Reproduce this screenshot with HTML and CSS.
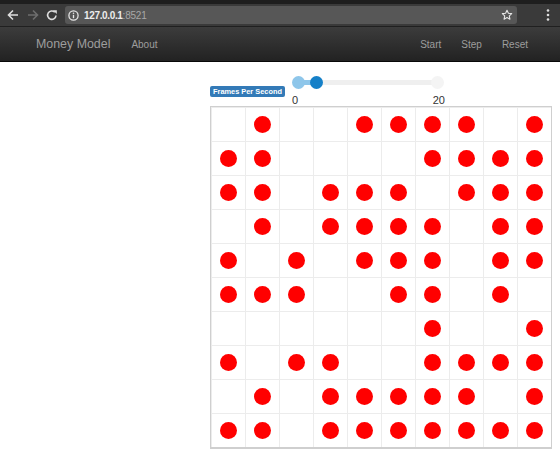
FILE: index.html
```html
<!DOCTYPE html>
<html>
<head>
<meta charset="utf-8">
<title>Money Model</title>
<link rel="stylesheet" href="styles.css">
</head>
<body>
<div class="chrome">
  <div class="tabstrip"></div>
  <div class="toolbar">
    <svg class="tb-icon back" width="14" height="14" viewBox="0 0 14 14"><path d="M12 7H2.5M7 2.5L2.5 7 7 11.5" fill="none" stroke="#dedede" stroke-width="1.6"/></svg>
    <svg class="tb-icon fwd" width="14" height="14" viewBox="0 0 14 14"><path d="M2 7h9.5M7 2.5L11.5 7 7 11.5" fill="none" stroke="#6e6e6e" stroke-width="1.6"/></svg>
    <svg class="tb-icon reload" width="14" height="14" viewBox="0 0 14 14"><path d="M11 7.5A4.2 4.2 0 1 1 9.8 4.2" fill="none" stroke="#dedede" stroke-width="1.6"/><path d="M8 2.2h3.8V6z" fill="#dedede"/></svg>
    <div class="omnibox">
      <svg class="info" width="11" height="11" viewBox="0 0 11 11"><circle cx="5.5" cy="5.5" r="4.6" fill="none" stroke="#e6e6e6" stroke-width="1.3"/><path d="M5.5 4.8v3.4" stroke="#e6e6e6" stroke-width="1.3"/><circle cx="5.5" cy="3.2" r="0.8" fill="#e6e6e6"/></svg>
      <span class="host">127.0.0.1</span><span class="port">:8521</span>
      <svg class="star" width="12" height="12" viewBox="0 0 12 12"><path d="M6 1.2l1.4 3 3.3.4-2.4 2.3.6 3.3L6 8.6 3.1 10.2l.6-3.3L1.3 4.6l3.3-.4z" fill="none" stroke="#e6e6e6" stroke-width="1.1" stroke-linejoin="round"/></svg>
    </div>
    <svg class="tb-icon menu" width="4" height="14" viewBox="0 0 4 14"><circle cx="2" cy="2.5" r="1.3" fill="#dedede"/><circle cx="2" cy="7" r="1.3" fill="#dedede"/><circle cx="2" cy="11.5" r="1.3" fill="#dedede"/></svg>
  </div>
</div>

<nav class="navbar">
  <a class="brand">Money Model</a>
  <a class="nav-link about">About</a>
  <div class="nav-right">
    <a class="nav-link">Start</a>
    <a class="nav-link">Step</a>
    <a class="nav-link">Reset</a>
  </div>
</nav>

<main class="main">
  <div class="controls">
    <span class="badge">Frames Per Second</span>
    <div class="slider">
      <div class="slider-bar">
        <div class="track"></div>
        <div class="fill"></div>
        <div class="knob knob-min"></div>
        <div class="knob knob-val"></div>
        <div class="knob knob-max"></div>
      </div>
      <div class="ticks"><span>0</span><span>20</span></div>
    </div>
  </div>

  <div class="board">
    <div class="cell"></div><div class="cell"><span class="dot"></span></div><div class="cell"></div><div class="cell"></div><div class="cell"><span class="dot"></span></div><div class="cell"><span class="dot"></span></div><div class="cell"><span class="dot"></span></div><div class="cell"><span class="dot"></span></div><div class="cell"></div><div class="cell"><span class="dot"></span></div>
    <div class="cell"><span class="dot"></span></div><div class="cell"><span class="dot"></span></div><div class="cell"></div><div class="cell"></div><div class="cell"></div><div class="cell"></div><div class="cell"><span class="dot"></span></div><div class="cell"><span class="dot"></span></div><div class="cell"><span class="dot"></span></div><div class="cell"><span class="dot"></span></div>
    <div class="cell"><span class="dot"></span></div><div class="cell"><span class="dot"></span></div><div class="cell"></div><div class="cell"><span class="dot"></span></div><div class="cell"><span class="dot"></span></div><div class="cell"><span class="dot"></span></div><div class="cell"></div><div class="cell"><span class="dot"></span></div><div class="cell"><span class="dot"></span></div><div class="cell"><span class="dot"></span></div>
    <div class="cell"></div><div class="cell"><span class="dot"></span></div><div class="cell"></div><div class="cell"><span class="dot"></span></div><div class="cell"><span class="dot"></span></div><div class="cell"><span class="dot"></span></div><div class="cell"><span class="dot"></span></div><div class="cell"></div><div class="cell"><span class="dot"></span></div><div class="cell"><span class="dot"></span></div>
    <div class="cell"><span class="dot"></span></div><div class="cell"></div><div class="cell"><span class="dot"></span></div><div class="cell"></div><div class="cell"><span class="dot"></span></div><div class="cell"><span class="dot"></span></div><div class="cell"><span class="dot"></span></div><div class="cell"></div><div class="cell"><span class="dot"></span></div><div class="cell"><span class="dot"></span></div>
    <div class="cell"><span class="dot"></span></div><div class="cell"><span class="dot"></span></div><div class="cell"><span class="dot"></span></div><div class="cell"></div><div class="cell"></div><div class="cell"><span class="dot"></span></div><div class="cell"><span class="dot"></span></div><div class="cell"></div><div class="cell"><span class="dot"></span></div><div class="cell"></div>
    <div class="cell"></div><div class="cell"></div><div class="cell"></div><div class="cell"></div><div class="cell"></div><div class="cell"></div><div class="cell"><span class="dot"></span></div><div class="cell"></div><div class="cell"></div><div class="cell"><span class="dot"></span></div>
    <div class="cell"><span class="dot"></span></div><div class="cell"></div><div class="cell"><span class="dot"></span></div><div class="cell"><span class="dot"></span></div><div class="cell"></div><div class="cell"></div><div class="cell"><span class="dot"></span></div><div class="cell"><span class="dot"></span></div><div class="cell"><span class="dot"></span></div><div class="cell"><span class="dot"></span></div>
    <div class="cell"></div><div class="cell"><span class="dot"></span></div><div class="cell"></div><div class="cell"><span class="dot"></span></div><div class="cell"><span class="dot"></span></div><div class="cell"><span class="dot"></span></div><div class="cell"><span class="dot"></span></div><div class="cell"><span class="dot"></span></div><div class="cell"></div><div class="cell"><span class="dot"></span></div>
    <div class="cell"><span class="dot"></span></div><div class="cell"><span class="dot"></span></div><div class="cell"></div><div class="cell"><span class="dot"></span></div><div class="cell"><span class="dot"></span></div><div class="cell"><span class="dot"></span></div><div class="cell"><span class="dot"></span></div><div class="cell"><span class="dot"></span></div><div class="cell"><span class="dot"></span></div><div class="cell"><span class="dot"></span></div>
  </div>
</main>
</body>
</html>
```

FILE: styles.css
```css
html, body {
  margin: 0;
  padding: 0;
  background: #fff;
  font-family: "Liberation Sans", Arial, sans-serif;
  overflow: hidden;
}

/* ---------- browser chrome ---------- */
.chrome {
  background: #3a3a3a;
}
.tabstrip {
  height: 4px;
  background: #1e1e1e;
}
.toolbar {
  height: 22px;
  display: flex;
  align-items: center;
  border-bottom: 1px solid #202020;
}
.tb-icon { flex: none; display: block; }
.back { margin-left: 6px; }
.fwd { margin-left: 6px; }
.reload { margin-left: 5px; }
.omnibox {
  margin-left: 6px;
  width: 452px;
  height: 18px;
  background: #575757;
  border-radius: 3px;
  display: flex;
  align-items: center;
  font-size: 10px;
  box-sizing: border-box;
  padding-left: 3px;
}
.info { display: block; margin-right: 5px; }
.host { color: #ececec; font-weight: bold; letter-spacing: -0.35px; }
.port { color: #a8a8a8; letter-spacing: -0.2px; }
.star { display: block; margin-left: auto; margin-right: 4px; }
.menu { margin-left: 29px; }

/* ---------- navbar ---------- */
.navbar {
  height: 34px;
  display: flex;
  align-items: center;
  background: linear-gradient(#3c3c3c, #222);
  border-bottom: 1px solid #080808;
  box-sizing: content-box;
}
.brand {
  color: #9d9d9d;
  font-size: 12.4px;
  margin-left: 36px;
}
.nav-link {
  color: #9d9d9d;
  font-size: 10px;
}
.about { margin-left: 21px; }
.nav-right {
  margin-left: auto;
  margin-right: 32px;
  display: flex;
  gap: 20px;
}

/* ---------- main ---------- */
.main {
  padding: 13px 0 0 210px;
}
.controls {
  display: flex;
  align-items: flex-start;
  height: 31px;
}
.badge {
  margin-top: 11px;
  display: block;
  width: 75px;
  height: 11px;
  line-height: 11px;
  background: #337ab7;
  color: #fff;
  font-weight: bold;
  font-size: 7.4px;
  text-align: center;
  border-radius: 2px;
  white-space: nowrap;
}
.slider {
  margin-left: 4px;
  width: 157px;
}
.slider-bar {
  position: relative;
  height: 16px;
}
.track {
  position: absolute;
  left: 6px;
  right: 6px;
  top: 5px;
  height: 5px;
  border-radius: 3px;
  background: #efefef;
}
.fill {
  position: absolute;
  left: 8px;
  width: 22px;
  top: 5px;
  height: 5px;
  background: #8ec6ea;
}
.knob {
  position: absolute;
  top: 1px;
  width: 13px;
  height: 13px;
  border-radius: 50%;
}
.knob-min { left: 3px; background: #8ec6ea; }
.knob-val { left: 21px; background: #1580c8; }
.knob-max { left: 142px; background: #f4f4f4; }
.ticks {
  margin-top: 3px;
  display: flex;
  justify-content: space-between;
  padding: 0 1px 0 3px;
  font-size: 11px;
  line-height: 12px;
  color: #333;
}

/* ---------- board ---------- */
.board {
  width: 340px;
  border: 1px solid #cfcfcf;
  border-bottom-width: 2px;
  display: grid;
  grid-template-columns: repeat(10, 34px);
  grid-auto-rows: 34px;
}
.cell {
  box-sizing: border-box;
  border-left: 1px solid #ececec;
  border-top: 1px solid #ececec;
  display: flex;
  align-items: center;
  justify-content: center;
}
.dot {
  display: block;
  width: 17px;
  height: 17px;
  border-radius: 50%;
  background: #ff0000;
}
```
